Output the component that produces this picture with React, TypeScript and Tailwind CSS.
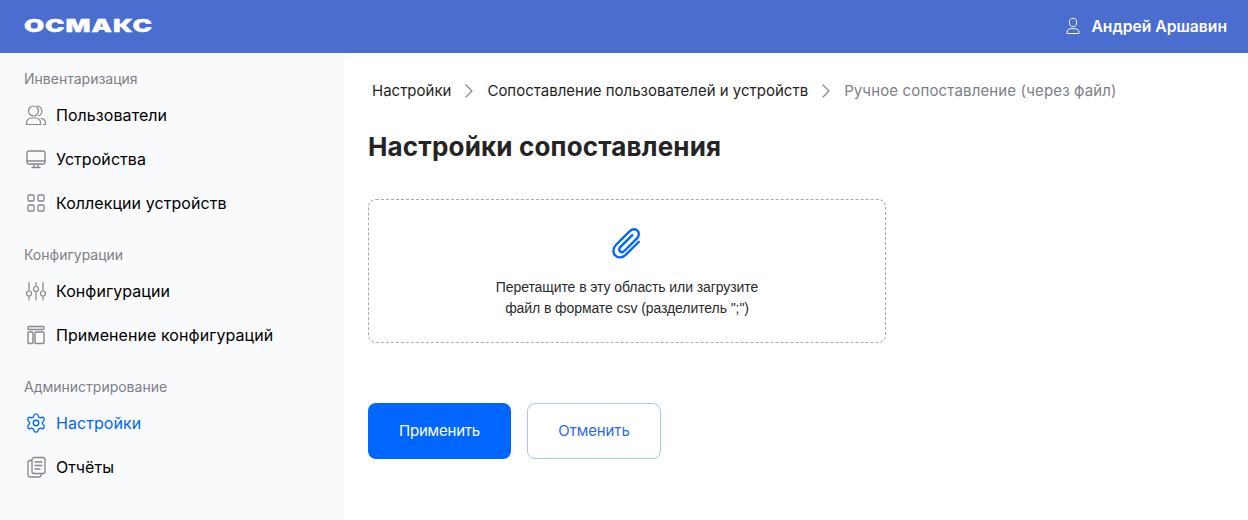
import React from "react";
import { ChevronRight, Settings } from "lucide-react";

const UsersIcon = () => (
  <svg width="24" height="24" viewBox="0 0 24 24" fill="none" stroke="#85878d" strokeWidth="1.2" strokeLinecap="round" strokeLinejoin="round">
    <circle cx="9.5" cy="8" r="5" />
    <path d="M13.5 3a5.2 5.2 0 0 1 1.5 9.8" />
    <path d="M2.5 21.5v-1.7c0-2.6 2.2-4.8 4.8-4.8h4.4c2.6 0 4.8 2.2 4.8 4.8v1.7z" />
    <path d="M17 15.4c2.6.5 4.5 2.3 4.5 4.6v1.5h-2" />
  </svg>
);

const MonitorIcon = () => (
  <svg width="24" height="24" viewBox="0 0 24 24" fill="none" stroke="#85878d" strokeWidth="1.3" strokeLinecap="round" strokeLinejoin="round">
    <rect x="3" y="4" width="18" height="13" rx="2" />
    <path d="M3 14h18" />
    <path d="M10 17v3M14 17v3M8 20.5h8" />
  </svg>
);

const GridIcon = () => (
  <svg width="24" height="24" viewBox="0 0 24 24" fill="none" stroke="#85878d" strokeWidth="1.3">
    <rect x="4" y="4" width="6" height="6" rx="1" />
    <rect x="14" y="4" width="6" height="6" rx="1" />
    <rect x="4" y="14" width="6" height="6" rx="1" />
    <rect x="14" y="14" width="6" height="6" rx="1" />
  </svg>
);

const SlidersIcon = () => (
  <svg width="24" height="24" viewBox="0 0 24 24" fill="none" stroke="#85878d" strokeWidth="1.2" strokeLinecap="round">
    <path d="M5 3.5v7.5M5 17.5v3.5M12 3.5v3M12 13.5v7.5M19 3.5v7.5M19 17.5v3.5" />
    <circle cx="5" cy="14.5" r="2.5" />
    <circle cx="12" cy="10" r="2.5" />
    <circle cx="19" cy="14.5" r="2.5" />
  </svg>
);

const PanelIcon = () => (
  <svg width="24" height="24" viewBox="0 0 24 24" fill="none" stroke="#85878d" strokeWidth="1.4" strokeLinejoin="round">
    <rect x="4" y="3.5" width="16" height="3" rx="1" />
    <rect x="4" y="9" width="5" height="11.5" rx="1" />
    <rect x="11" y="9" width="9" height="11.5" rx="1" />
  </svg>
);

const ReportsIcon = () => (
  <svg width="24" height="24" viewBox="0 0 24 24" fill="none" stroke="#85878d" strokeWidth="1.3" strokeLinecap="round" strokeLinejoin="round">
    <rect x="8" y="2.5" width="13" height="16" rx="2" />
    <path d="M11 7h7M11 10.5h7M11 14h5" />
    <path d="M8 5.5H6a2 2 0 0 0-2 2v12a2.5 2.5 0 0 0 2.5 2.5H15a2 2 0 0 0 2-2v-1" />
  </svg>
);

const ClipIcon = () => (
  <svg width="40" height="40" viewBox="0 0 32 32" fill="none" stroke="#0066ff" strokeWidth="1.9" strokeLinecap="round" strokeLinejoin="round">
    <path d="M25.5 15 15.2 25.3c-2.6 2.6-6.4 2.9-8.6.7s-1.9-6 .7-8.6L18.2 6.5c1.8-1.8 4.6-2 6.2-.4s1.4 4.4-.4 6.2L13.8 22.4c-1 1-2.5 1.1-3.4.3s-.8-2.4.2-3.4l9.6-9.6" />
  </svg>
);

const ProfileIcon = () => (
  <svg width="16" height="18" viewBox="0 0 16 18" fill="none" stroke="#ffffff" strokeWidth="1" strokeLinejoin="round">
    <ellipse cx="8" cy="5.5" rx="3.6" ry="4.2" />
    <path d="M2 16.5v-1.2c0-2 1.6-3.6 3.6-3.6h4.8c2 0 3.6 1.6 3.6 3.6v1.2z" />
  </svg>
);

const groups = [
  {
    title: "Инвентаризация",
    items: [
      { icon: <UsersIcon />, label: "Пользователи" },
      { icon: <MonitorIcon />, label: "Устройства" },
      { icon: <GridIcon />, label: "Коллекции устройств" },
    ],
  },
  {
    title: "Конфигурации",
    items: [
      { icon: <SlidersIcon />, label: "Конфигурации" },
      { icon: <PanelIcon />, label: "Применение конфигураций" },
    ],
  },
  {
    title: "Администрирование",
    items: [
      { icon: <Settings size={22} strokeWidth={1.5} color="#0066ff" />, label: "Настройки", active: true },
      { icon: <ReportsIcon />, label: "Отчёты" },
    ],
  },
];

const App = () => {
  return (
    <div className="flex flex-col w-[1248px] h-[520px] overflow-hidden bg-white font-['Inter',sans-serif]">
      <header className="flex justify-between items-center bg-[#4a6dcf] pr-[21px] pl-6 h-[53px] shrink-0">
        <div className="mb-[2px] font-black text-[18px] text-white leading-none tracking-[0.6px] origin-left scale-x-[1.45] [-webkit-text-stroke:0.3px_white]">
          ОСМАКС
        </div>
        <div className="flex items-center gap-[10px]">
          <ProfileIcon />
          <span className="font-semibold text-[15.7px] text-white">Андрей Аршавин</span>
        </div>
      </header>

      <div className="flex flex-1 min-h-0">
        <aside className="flex flex-col gap-5 bg-[#f9fafc] pt-[16px] pl-6 w-[344px] shrink-0">
          {groups.map((group) => (
            <div key={group.title} className="flex flex-col">
              <div className="mb-1 h-5 text-[#7d8087] text-sm leading-5">{group.title}</div>
              {group.items.map((item) => (
                <div key={item.label} className="flex items-center gap-2 h-11">
                  <span className="flex justify-center items-center w-6 h-6 shrink-0">{item.icon}</span>
                  <span className={item.active ? "text-[#0066ff] text-base tracking-[0.06px]" : "text-black text-base tracking-[0.06px]"}>
                    {item.label}
                  </span>
                </div>
              ))}
            </div>
          ))}
        </aside>

        <main className="flex flex-col flex-1 items-start pt-[27px] pl-6">
          <nav className="flex items-center gap-[6px] ml-1 h-[22px] text-[#1f1f22] text-[15px]">
            <span>Настройки</span>
            <ChevronRight size={24} className="text-[#8a8a8f]" strokeWidth={1.3} />
            <span>Сопоставление пользователей и устройств</span>
            <ChevronRight size={24} className="text-[#8a8a8f]" strokeWidth={1.3} />
            <span className="text-[#7d8087] tracking-[0.15px]">Ручное сопоставление (через файл)</span>
          </nav>
          <h1 className="mt-[27px] font-bold text-[#242427] text-[26px] leading-[36px] tracking-[0.17px]">Настройки сопоставления</h1>
          <div className="flex flex-col items-center mt-[34px] border border-[#a8a8ad] border-dashed rounded-lg w-[518px] h-[144px]">
            <div className="mt-[23px]">
              <ClipIcon />
            </div>
            <p className="mt-[14px] font-['Liberation_Sans',sans-serif] text-[#2a2a2e] text-sm text-center leading-[21px] tracking-[-0.08px]">
              Перетащите в эту область или загрузите
              <br />
              файл в формате csv (разделитель ";")
            </p>
          </div>
          <div className="flex gap-4 mt-[60px]">
            <button className="bg-[#0066ff] rounded-lg w-[143px] h-14 text-[15px] text-white tracking-[-0.2px]">Применить</button>
            <button className="bg-white border border-[#a9c6fb] rounded-lg w-[134px] h-14 text-[#2f66f0] text-[15px] tracking-[-0.1px]">
              Отменить
            </button>
          </div>
        </main>
      </div>
    </div>
  );
};

export default App;
